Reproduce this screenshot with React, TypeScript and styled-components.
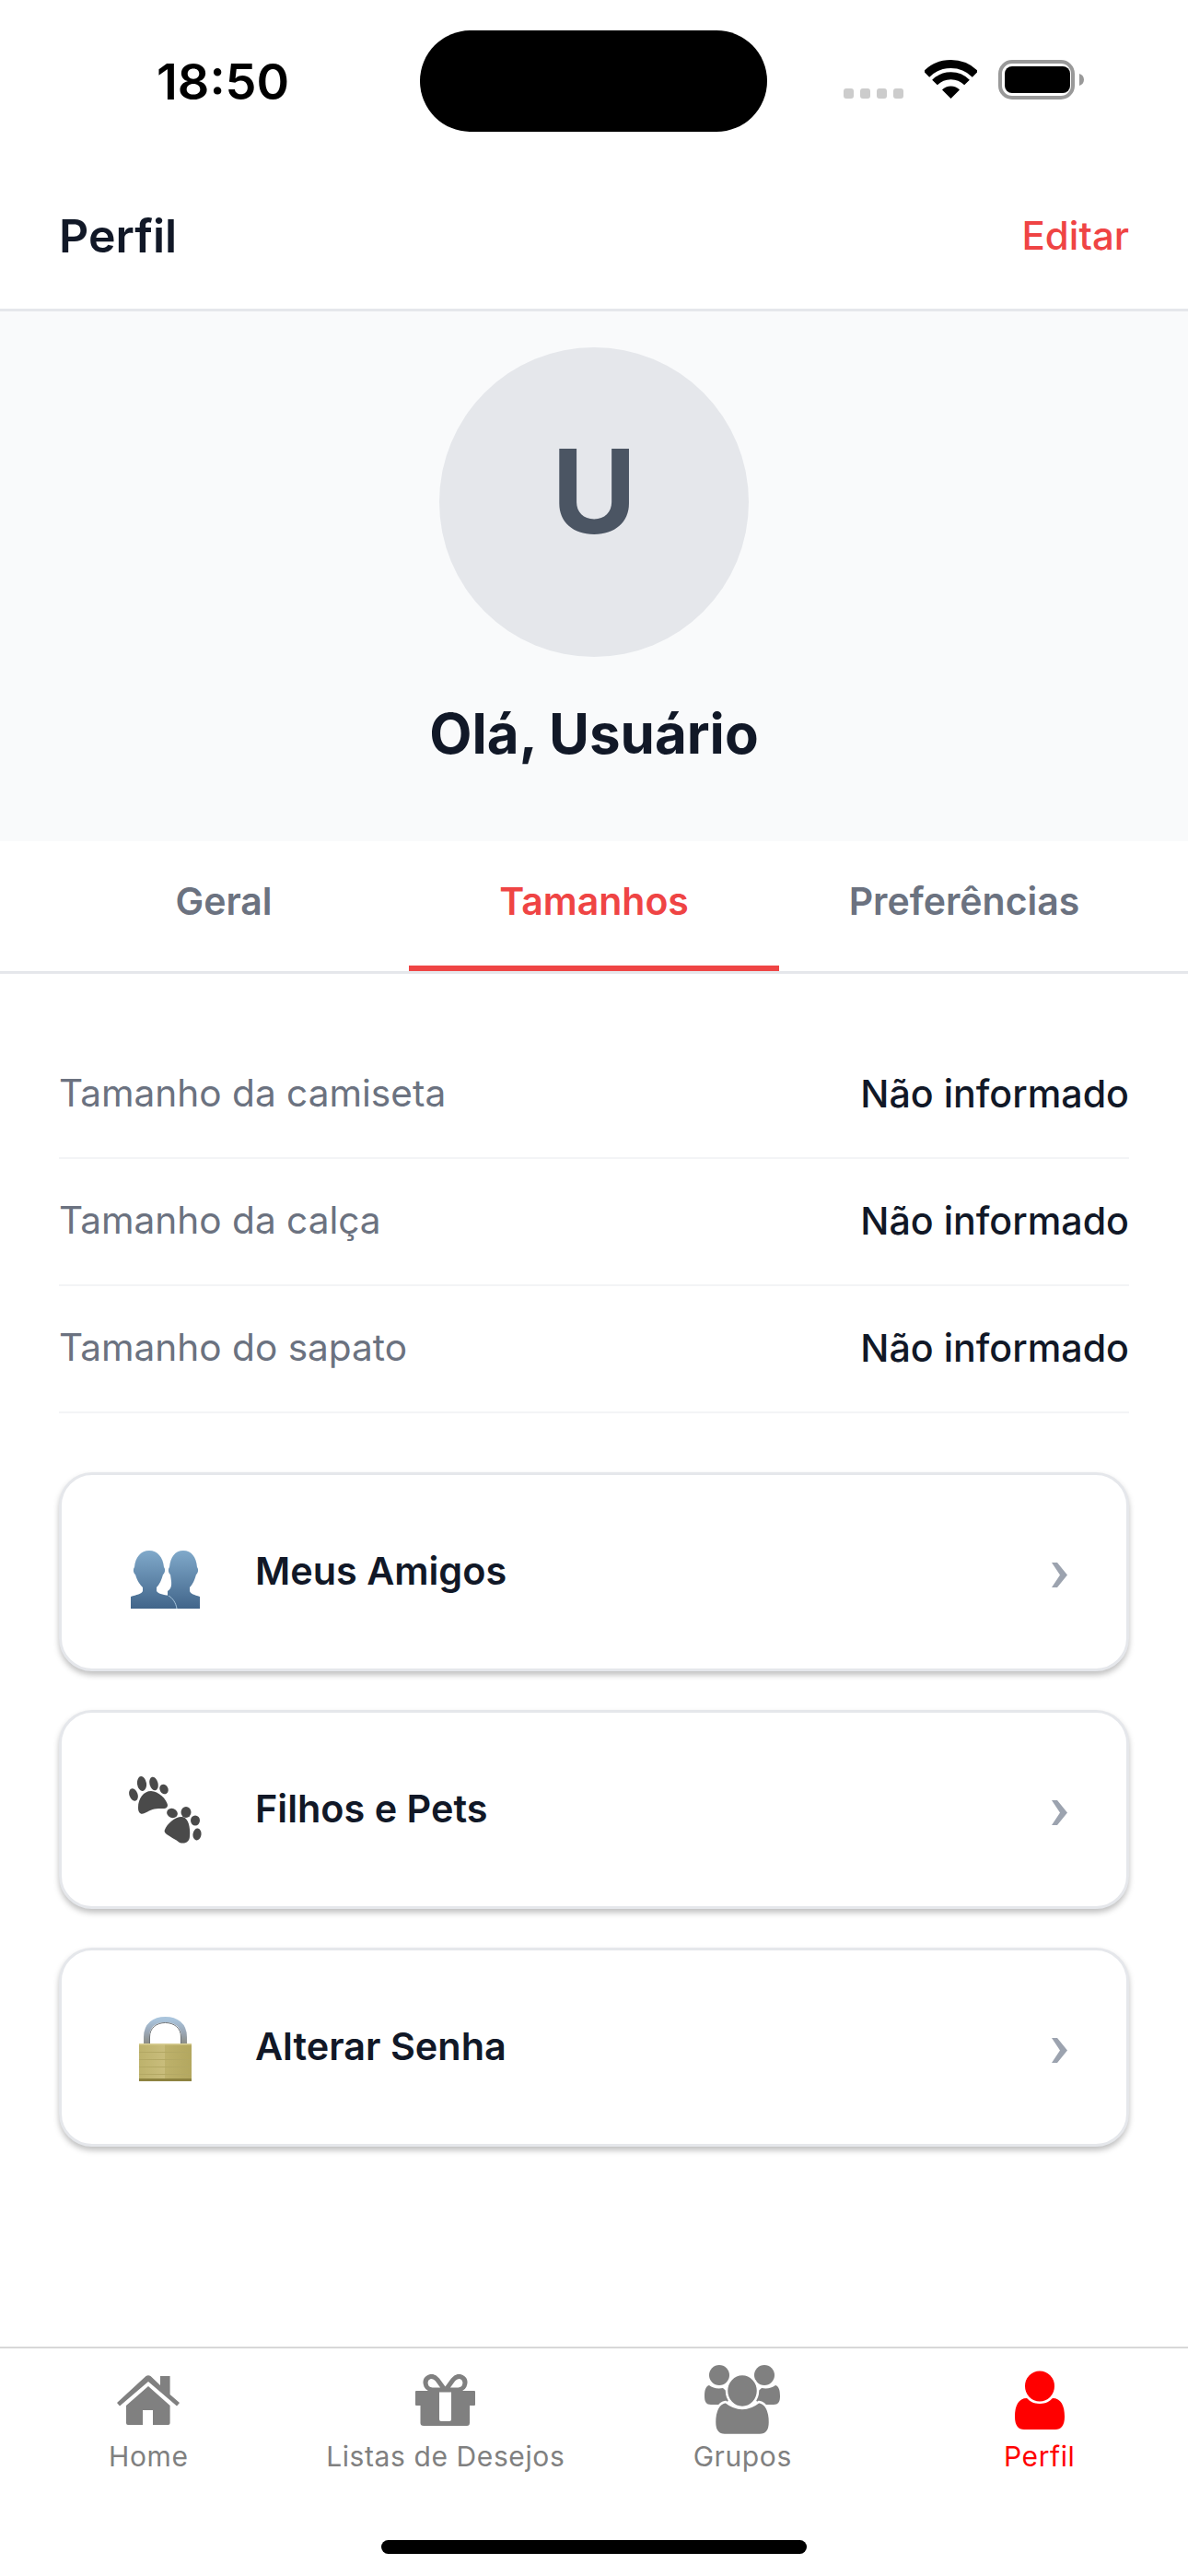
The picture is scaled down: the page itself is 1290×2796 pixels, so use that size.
import React from 'react';
import styled, { createGlobalStyle } from 'styled-components';

const GlobalStyle = createGlobalStyle`
  html, body {
    margin: 0;
    padding: 0;
    background: #fff;
    font-family: Inter, "Liberation Sans", sans-serif;
  }
  * {
    box-sizing: border-box;
  }
`;

const Page = styled.div`
  width: 1290px;
  height: 2796px;
  display: flex;
  flex-direction: column;
  background: #fff;
  overflow: hidden;
`;

const StatusBar = styled.div`
  height: 176px;
  padding-top: 33px;
  display: grid;
  grid-template-columns: 456px 377px 1fr;
  align-items: start;
`;

const Time = styled.div`
  height: 110px;
  padding-left: 170px;
  display: flex;
  align-items: center;
  font-size: 54px;
  font-weight: 600;
  color: #000;
`;

const Island = styled.div`
  height: 110px;
  border-radius: 55px;
  background: #000;
`;

const StatusIcons = styled.div`
  height: 110px;
  padding: 32px 0 0 83px;
  display: flex;
  align-items: flex-start;
`;

const SignalDots = styled.div`
  display: flex;
  gap: 7px;
  margin: 31px 23px 0 0;
`;

const SignalDot = styled.span`
  width: 11px;
  height: 11px;
  border-radius: 3px;
  background: #ccc;
`;

const WifiIcon = styled.svg`
  width: 57px;
  height: 42px;
  margin-right: 23px;
`;

const BatteryIcon = styled.svg`
  width: 94px;
  height: 43px;
`;

const Header = styled.header`
  height: 162px;
  padding: 0 64px;
  display: flex;
  align-items: center;
  justify-content: space-between;
  border-bottom: 3px solid #e5e7eb;
`;

const Title = styled.h1`
  margin: 0;
  font-size: 50px;
  font-weight: 600;
  color: #111827;
`;

const EditLink = styled.span`
  font-size: 42px;
  font-weight: 500;
  color: #ef4444;
`;

const ProfileHero = styled.section`
  height: 575px;
  padding-top: 39px;
  display: flex;
  flex-direction: column;
  align-items: center;
  background: #f9fafb;
`;

const Avatar = styled.div`
  width: 336px;
  height: 336px;
  padding-bottom: 24px;
  border-radius: 50%;
  display: flex;
  align-items: center;
  justify-content: center;
  background: #e5e7eb;
  font-size: 126px;
  font-weight: 700;
  color: #4b5563;
`;

const Greeting = styled.h2`
  margin: 47px 0 0;
  font-size: 60px;
  font-weight: 700;
  line-height: 72px;
  color: #111827;
`;

const Tabs = styled.nav`
  height: 144px;
  display: grid;
  grid-template-columns: 402px 402px 402px;
  justify-content: center;
  border-bottom: 3px solid #e5e7eb;
`;

const Tab = styled.div<{ $active?: boolean }>`
  height: 141px;
  padding-bottom: 6px;
  display: flex;
  align-items: center;
  justify-content: center;
  font-size: 41px;
  font-weight: 600;
  color: ${(props) => (props.$active ? '#ef4444' : '#6b7280')};
  border-bottom: 6px solid ${(props) => (props.$active ? '#ef4444' : 'transparent')};
`;

const Content = styled.main`
  flex: 1;
  padding: 63px 64px 0;
`;

const InfoRow = styled.div`
  height: 138px;
  padding-bottom: 3px;
  display: flex;
  align-items: center;
  justify-content: space-between;
  border-bottom: 2px solid #f3f4f6;
`;

const InfoLabel = styled.span`
  font-size: 40.6px;
  color: #6b7280;
`;

const InfoValue = styled.span`
  font-size: 41.2px;
  font-weight: 500;
  color: #111827;
`;

const Cards = styled.div`
  margin-top: 64px;
  display: flex;
  flex-direction: column;
  gap: 42px;
`;

const Card = styled.div`
  height: 216px;
  padding: 0 64px 0 66px;
  display: flex;
  align-items: center;
  border: 3px solid #e5e7eb;
  border-radius: 36px;
  background: #fff;
  box-shadow: 0 4px 6px rgba(0, 0, 0, 0.25);
`;

const CardIcon = styled.div<{ $drop?: number }>`
  width: 93px;
  margin-right: 51px;
  padding-top: ${(props) => props.$drop || 0}px;
  display: flex;
  justify-content: center;
  svg {
    display: block;
  }
`;

const CardLabel = styled.span`
  flex: 1;
  padding-bottom: 3px;
  font-size: 41.4px;
  font-weight: 600;
  color: #111827;
`;

const Chevron = styled.svg`
  width: 17px;
  height: 27px;
  margin-top: 6px;
`;

const TabBar = styled.footer`
  height: 249px;
  border-top: 2px solid #d8d8d8;
  position: relative;
  display: grid;
  grid-template-columns: repeat(4, 1fr);
  align-items: start;
`;

const BarItem = styled.div<{ $active?: boolean }>`
  margin-top: 13px;
  display: flex;
  flex-direction: column;
  align-items: center;
  font-size: 30px;
  font-weight: 400;
  letter-spacing: 0.6px;
  color: ${(props) => (props.$active ? '#ff0000' : '#808080')};
`;

const BarIconSlot = styled.div`
  height: 86px;
  display: flex;
  align-items: center;
  svg {
    display: block;
  }
`;

const BarLabel = styled.span`
  line-height: 36px;
`;

const HomeIndicator = styled.div`
  position: absolute;
  left: 414px;
  bottom: 24px;
  width: 462px;
  height: 15px;
  border-radius: 8px;
  background: #000;
`;

const BustsIcon = () => (
  <svg width="75" height="63" viewBox="0 0 75 63">
    <defs>
      <linearGradient id="bust" gradientUnits="userSpaceOnUse" x1="0" y1="0" x2="0" y2="63">
        <stop offset="0" stopColor="#80a9ca" />
        <stop offset="1" stopColor="#41658a" />
      </linearGradient>
    </defs>
    <path
      fill="url(#bust)"
      d="M57 0C66 0 71 7 72 18C74 20 73 25 71 26C69 33 67 37 64 40V44C65 47 69 48 75 50V63H40V44C46 40 44 34 43 26C41 25 40 20 42 18C43 7 48 0 57 0Z"
    />
    <path
      fill="url(#bust)"
      d="M20 0C29 0 35 7 36 18C38 20 37 25 35 26C33 33 31 37 28 40V44C30 47 36 48 41 49C46 52 49 57 50 63H0V50C6 48 12 47 13 44V40C10 37 7 33 5 26C3 25 2 20 4 18C5 7 11 0 20 0Z"
    />
    <path fill="none" stroke="#a9c6dc" strokeWidth="1" d="M41 49C46 52 49 57 50 63" />
  </svg>
);

const PawsIcon = () => (
  <svg width="79" height="73" viewBox="0 0 79 73" fill="#4a4a4a">
    <ellipse cx="5" cy="20" rx="4.5" ry="7" transform="rotate(-20 5 20)" />
    <ellipse cx="14" cy="8" rx="5" ry="8" transform="rotate(-8 14 8)" />
    <ellipse cx="27" cy="8" rx="4.5" ry="7.5" transform="rotate(-15 27 8)" />
    <ellipse cx="38" cy="14" rx="4.5" ry="5.5" transform="rotate(-30 38 14)" />
    <path d="M10 34C10 24 16 16 24 16C32 16 41 25 42 31C42 36 37 35 32 35C26 35 21 38 17 40C13 42 10 40 10 34Z" />
    <ellipse cx="47" cy="40" rx="6" ry="5" transform="rotate(20 47 40)" />
    <ellipse cx="62" cy="39" rx="5.5" ry="6" />
    <ellipse cx="72" cy="48" rx="5" ry="5.5" />
    <ellipse cx="74" cy="63" rx="4.5" ry="6.5" transform="rotate(8 74 63)" />
    <path d="M39 58C41 52 50 44 57 44C64 44 67 54 66 65C66 71 61 74 55 72C50 68 45 66 41 63C39 61 38 60 39 58Z" />
  </svg>
);

const LockIcon = () => (
  <svg width="57" height="70" viewBox="0 0 57 70">
    <defs>
      <linearGradient id="shackle" x1="0" y1="0" x2="0" y2="1">
        <stop offset="0" stopColor="#a9c4dc" />
        <stop offset="0.5" stopColor="#9aa6b4" />
        <stop offset="1" stopColor="#8a8a80" />
      </linearGradient>
      <linearGradient id="lockBody" x1="0" y1="0" x2="1" y2="0">
        <stop offset="0" stopColor="#bdb26c" />
        <stop offset="0.5" stopColor="#c9bd7c" />
        <stop offset="0.5" stopColor="#bdb16b" />
        <stop offset="1" stopColor="#b3a75f" />
      </linearGradient>
    </defs>
    <path fill="none" stroke="url(#shackle)" strokeWidth="6" d="M8 31V22C8 9 17 3 28.5 3C40 3 49 9 49 22V31" />
    <path fill="none" stroke="#6f7478" strokeWidth="1" d="M11.5 31V22C11.5 12 19 6.5 28.5 6.5C38 6.5 45.5 12 45.5 22V31" />
    <rect x="0" y="29" width="57" height="41" fill="url(#lockBody)" />
    <rect x="0" y="38" width="57" height="1" fill="#b3a864" />
    <rect x="0" y="46" width="57" height="1" fill="#b3a864" />
    <rect x="0" y="54" width="57" height="1" fill="#b3a864" />
    <rect x="0" y="62" width="57" height="1" fill="#b3a864" />
    <rect x="0" y="67" width="57" height="3" fill="#8d8240" />
    <rect x="0" y="29" width="57" height="1.5" fill="#d9cf95" />
  </svg>
);

const HomeTabIcon = () => (
  <svg width="68" height="54" viewBox="0 0 68 54" fill="currentColor">
    <path d="M0 30L31.5 1Q34 -0.5 36.5 1L47 11V1H57.6V21L68 30L65 33.5L34 7L3 33.5Z" />
    <path d="M34 12L57.6 33V52Q57.6 54 55.6 54H39V38H28V54H12Q10 54 10 52V33Z" />
  </svg>
);

const GiftTabIcon = () => (
  <svg width="65" height="56" viewBox="0 0 65 56" fill="currentColor">
    <path
      fill="none"
      stroke="currentColor"
      strokeWidth="5"
      d="M32 17L24 6Q20 1 15 3Q9 6 12 13Q14 17 21 17H44Q51 17 53 13Q56 6 50 3Q45 1 41 6L33 17"
    />
    <path
      fillRule="evenodd"
      d="M1 18H64Q65 18 65 19V33Q65 34 64 34H59V53Q59 56 56 56H9Q5.5 56 5.5 53V34H1Q0 34 0 33V19Q0 18 1 18ZM26 18V49Q26 51 28 51H37Q39 51 39 49V18Z"
    />
  </svg>
);

const GroupTabIcon = () => (
  <svg width="82" height="76" viewBox="0 0 82 76" fill="currentColor">
    <ellipse cx="16" cy="11" rx="11" ry="11" />
    <ellipse cx="65" cy="11" rx="11" ry="11" />
    <path d="M0 34C0 28 1 23 5 22C9 25 14 26 20 25L30 34L22 43H7C2 43 0 40 0 34Z" />
    <path d="M82 34C82 28 81 23 77 22C73 25 68 26 62 25L52 34L60 43H75C80 43 82 40 82 34Z" />
    <path
      stroke="#fff"
      strokeWidth="2.5"
      d="M11 62C11 50 15 41 23 40C28 44 34 47 41 47C48 47 54 44 59 40C67 41 71 50 71 62C71 71 67 76 60 76H22C15 76 11 71 11 62Z"
    />
    <ellipse cx="41" cy="28" rx="17" ry="18" stroke="#fff" strokeWidth="2.5" />
  </svg>
);

const PersonTabIcon = () => (
  <svg width="54" height="64" viewBox="0 0 54 64" fill="currentColor">
    <path d="M0 50C0 38 4 30 13 30C16 33 20 36 27 36C34 36 38 33 41 30C50 30 54 38 54 50C54 60 50 64 44 64H10C4 64 0 60 0 50Z" />
    <ellipse cx="27" cy="17" rx="17" ry="17.5" stroke="#fff" strokeWidth="2" />
  </svg>
);

const rows = ['Tamanho da camiseta', 'Tamanho da calça', 'Tamanho do sapato'];

const App = () => {
  return (
    <Page>
      <GlobalStyle />
      <StatusBar>
        <Time>18:50</Time>
        <Island />
        <StatusIcons>
          <SignalDots>
            <SignalDot />
            <SignalDot />
            <SignalDot />
            <SignalDot />
          </SignalDots>
          <WifiIcon viewBox="0 0 57 42">
            <path fill="none" stroke="#000" strokeWidth="9" d="M2 15.5A37.5 37.5 0 0 1 55 15.5" />
            <path fill="none" stroke="#000" strokeWidth="8" d="M11 24.5A24.7 24.7 0 0 1 46 24.5" />
            <path fill="#000" d="M28.5 42L19 32.5A13.4 13.4 0 0 1 38 32.5Z" />
          </WifiIcon>
          <BatteryIcon viewBox="0 0 94 43">
            <rect x="2" y="2" width="79" height="39" rx="13" fill="none" stroke="#999" strokeWidth="4" />
            <rect x="7" y="7" width="71" height="29" rx="8" fill="#000" />
            <path d="M88 15C91 16 93 18 93 21.5C93 25 91 27 88 28Z" fill="#999" />
          </BatteryIcon>
        </StatusIcons>
      </StatusBar>

      <Header>
        <Title>Perfil</Title>
        <EditLink>Editar</EditLink>
      </Header>

      <ProfileHero>
        <Avatar>U</Avatar>
        <Greeting>Olá, Usuário</Greeting>
      </ProfileHero>

      <Tabs>
        <Tab>Geral</Tab>
        <Tab $active>Tamanhos</Tab>
        <Tab>Preferências</Tab>
      </Tabs>

      <Content>
        {rows.map((label) => (
          <InfoRow key={label}>
            <InfoLabel>{label}</InfoLabel>
            <InfoValue>Não informado</InfoValue>
          </InfoRow>
        ))}
        <Cards>
          <Card>
            <CardIcon $drop={16}>
              <BustsIcon />
            </CardIcon>
            <CardLabel>Meus Amigos</CardLabel>
            <Chevron viewBox="0 0 17 27">
              <path fill="#9ca3af" d="M0 0H6L17 13.5L6 27H0L9 13.5Z" />
            </Chevron>
          </Card>
          <Card>
            <CardIcon>
              <PawsIcon />
            </CardIcon>
            <CardLabel>Filhos e Pets</CardLabel>
            <Chevron viewBox="0 0 17 27">
              <path fill="#9ca3af" d="M0 0H6L17 13.5L6 27H0L9 13.5Z" />
            </Chevron>
          </Card>
          <Card>
            <CardIcon $drop={4}>
              <LockIcon />
            </CardIcon>
            <CardLabel>Alterar Senha</CardLabel>
            <Chevron viewBox="0 0 17 27">
              <path fill="#9ca3af" d="M0 0H6L17 13.5L6 27H0L9 13.5Z" />
            </Chevron>
          </Card>
        </Cards>
      </Content>

      <TabBar>
        <BarItem>
          <BarIconSlot>
            <HomeTabIcon />
          </BarIconSlot>
          <BarLabel>Home</BarLabel>
        </BarItem>
        <BarItem>
          <BarIconSlot>
            <GiftTabIcon />
          </BarIconSlot>
          <BarLabel>Listas de Desejos</BarLabel>
        </BarItem>
        <BarItem>
          <BarIconSlot>
            <GroupTabIcon />
          </BarIconSlot>
          <BarLabel>Grupos</BarLabel>
        </BarItem>
        <BarItem $active>
          <BarIconSlot>
            <PersonTabIcon />
          </BarIconSlot>
          <BarLabel>Perfil</BarLabel>
        </BarItem>
        <HomeIndicator />
      </TabBar>
    </Page>
  );
};

export default App;
